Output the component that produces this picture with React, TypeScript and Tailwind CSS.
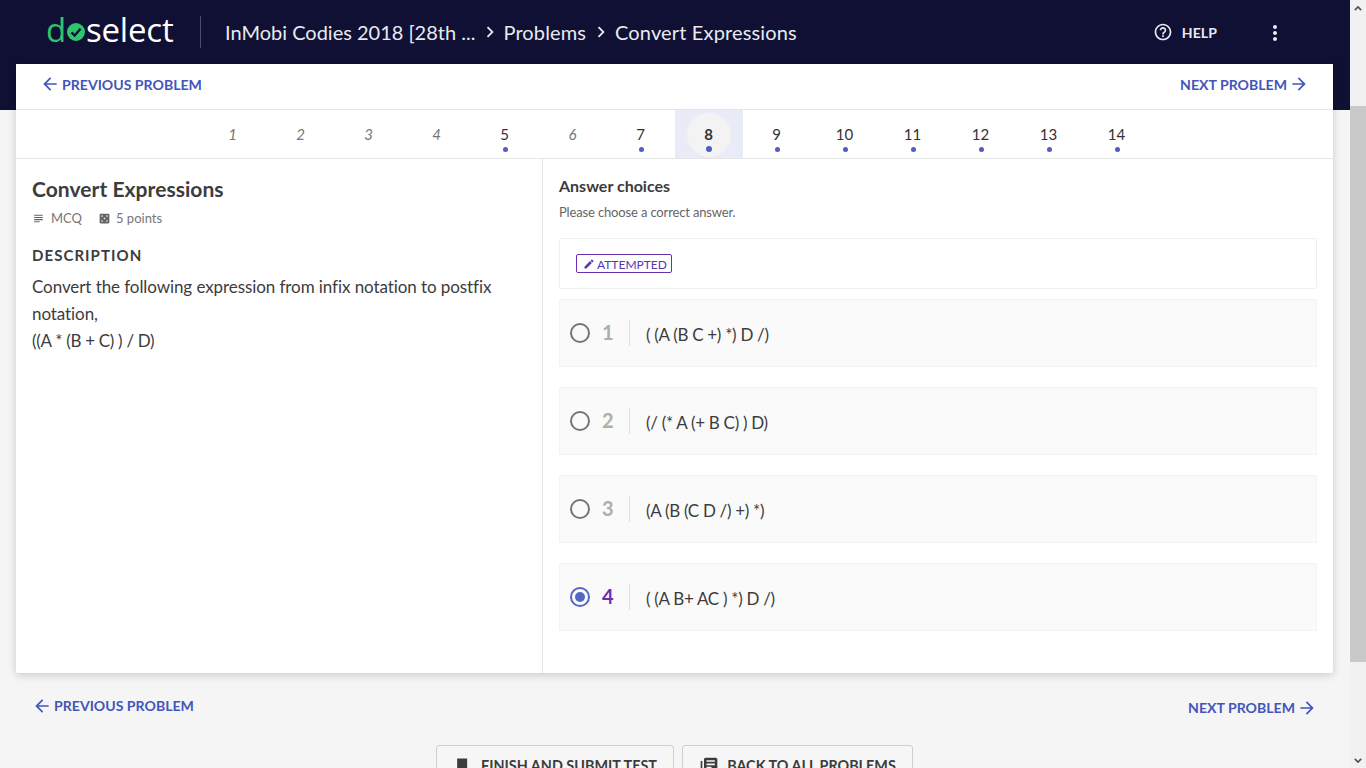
import {
  MdArrowBack,
  MdArrowForward,
  MdCasino,
  MdChevronRight,
  MdEdit,
  MdHelpOutline,
  MdLibraryBooks,
  MdMoreVert,
  MdSubject,
} from "react-icons/md";

const problems = [
  { n: 1, done: false },
  { n: 2, done: false },
  { n: 3, done: false },
  { n: 4, done: false },
  { n: 5, done: true },
  { n: 6, done: false },
  { n: 7, done: true },
  { n: 8, done: true, active: true },
  { n: 9, done: true },
  { n: 10, done: true },
  { n: 11, done: true },
  { n: 12, done: true },
  { n: 13, done: true },
  { n: 14, done: true },
];

const choices = [
  { n: 1, text: "( (A (B C +) *) D /)" },
  { n: 2, text: "(/ (* A (+ B C) ) D)" },
  { n: 3, text: "(A (B (C D /) +) *)" },
  { n: 4, text: "( (A B+ AC ) *) D /)", selected: true },
];

const Logo = () => (
  <div className="flex items-center text-[33px] leading-none tracking-[-0.2px] font-['Open_Sans',sans-serif]">
    <span className="text-[#2fc46e]">d</span>
    <svg viewBox="0 0 20 20" className="w-[18px] h-[18px] mt-[5px] mx-[1px]">
      <circle cx="10" cy="10" r="10" fill="#2fc46e" />
      <path d="M5 10.5l3.5 3.5L15 6.5" fill="none" stroke="#0f1033" strokeWidth="2.6" />
    </svg>
    <span className="text-white">select</span>
  </div>
);

const Header = () => (
  <header className="h-[110px] -mb-[46px] bg-[#0f1033] shrink-0">
    <div className="h-[64px] pl-[46px] pr-[64px] flex items-center text-[#e8eaf0]">
      <div className="w-[154px] -mt-[6px]">
        <Logo />
      </div>
      <div className="w-px h-[32px] bg-white/25 mr-[24px] -mt-[1px]" />
      <div className="flex items-center text-[20px] whitespace-nowrap">
        <span>InMobi Codies 2018 [28th ...</span>
        <MdChevronRight className="w-[22px] h-[22px] ml-[4px] mr-[2px]" />
        <span className="tracking-[0.12px]">Problems</span>
        <MdChevronRight className="w-[22px] h-[22px] ml-[4px] mr-[3px]" />
        <span className="tracking-[0.15px]">Convert Expressions</span>
      </div>
      <div className="ml-auto flex items-center">
        <MdHelpOutline className="w-[20px] h-[20px] mr-[9px]" />
        <span className="text-[14px] font-bold tracking-[0.1px] mr-[46px]">HELP</span>
        <MdMoreVert className="w-[24px] h-[24px] mr-[-1px] mt-[2px]" />
      </div>
    </div>
  </header>
);

const NavBar = () => (
  <div className="h-[46px] px-[24px] pb-[4px] flex items-center justify-between border-b border-[#e5e5e5] text-[#4355bb] text-[14.1px] font-bold">
    <a className="flex items-center gap-[2px]">
      <MdArrowBack className="w-[20px] h-[20px]" />
      PREVIOUS PROBLEM
    </a>
    <a className="flex items-center gap-[2px]">
      NEXT PROBLEM
      <MdArrowForward className="w-[20px] h-[20px]" />
    </a>
  </div>
);

const ProblemTabs = () => (
  <div className="h-[49px] flex justify-center border-b border-[#e5e5e5]">
    {problems.map((p) => (
      <div
        key={p.n}
        className={
          "relative w-[68px] flex items-center justify-center " +
          (p.active ? "bg-[#e9ecf6]" : "")
        }
      >
        {p.active && <div className="absolute left-[12px] top-[3px] w-[44px] h-[44px] rounded-full bg-[#f3f3f3]" />}
        <span
          className={
            "relative text-[15px] " +
            (p.active ? "font-bold text-[#333]" : p.done ? "text-[#333]" : "italic text-[#777]")
          }
        >
          {p.n}
        </span>
        {p.done && (
          <span
            className={
              "absolute rounded-full bg-[#4d5ec1] " +
              (p.active ? "left-[31px] top-[36px] w-[6px] h-[6px]" : "left-[32px] top-[37px] w-[5px] h-[5px]")
            }
          />
        )}
      </div>
    ))}
  </div>
);

const Description = () => (
  <section className="w-[527px] shrink-0 border-r border-[#e5e5e5] pl-[16px] pr-[30px] pt-[17px] text-[#3c3c3c]">
    <h1 className="text-[21px] leading-[26px] font-bold tracking-[0.05px]">Convert Expressions</h1>
    <div className="mt-[7px] flex items-center text-[13px] leading-[18px] text-[#777]">
      <MdSubject className="w-[13px] h-[13px] mr-[6px] text-[#666]" />
      <span className="mr-[16px]">MCQ</span>
      <MdCasino className="w-[13px] h-[13px] mr-[5px] text-[#666]" />
      <span>5 points</span>
    </div>
    <h2 className="mt-[18px] text-[15px] leading-[20px] font-bold tracking-[1.05px]">DESCRIPTION</h2>
    <p className="mt-[8px] text-[17px] leading-[27px] tracking-[-0.08px]">
      Convert the following expression from infix notation to postfix notation,
      <br />
      <span className="tracking-[-0.3px]">((A * (B + C) ) / D)</span>
    </p>
  </section>
);

const Choice = ({ n, text, selected }: { n: number; text: string; selected?: boolean }) => (
  <div className="h-[68px] flex items-center bg-[#fafafa] border border-[#f3f3f3] rounded-[2px] pl-[10px]">
    <span
      className={
        "w-[20px] h-[20px] rounded-full border-2 flex items-center justify-center " +
        (selected ? "border-[#5467c4]" : "border-[#757575]")
      }
    >
      {selected && <span className="w-[10px] h-[10px] rounded-full bg-[#5467c4]" />}
    </span>
    <span
      className={
        "w-[27px] ml-[12px] pb-[2px] text-[20px] font-bold " + (selected ? "text-[#6930b0]" : "text-[#aab0aa]")
      }
    >
      {n}
    </span>
    <span className="w-px h-[26px] bg-[#e0e0e0]" />
    <span className="ml-[16px] pt-[4px] text-[17px] text-[#3c3c3c] tracking-[-0.3px]">{text}</span>
  </div>
);

const Answers = () => (
  <section className="flex-1 pl-[16px] pr-[16px] pt-[17px]">
    <h2 className="text-[16px] leading-[20px] font-bold text-[#3c3c3c]">Answer choices</h2>
    <p className="mt-[7px] text-[13px] leading-[18px] text-[#666] tracking-[-0.15px]">Please choose a correct answer.</p>
    <div className="mt-[17px] h-[51px] flex items-center border border-[#f0f0f0] rounded-[2px] pl-[16px]">
      <span className="h-[19px] flex items-center gap-[2px] pl-[6px] pr-[4px] border border-[#6930b0] rounded-[2px] text-[12px] text-[#5a35b0]">
        <MdEdit className="w-[12px] h-[12px]" />
        <span className="pt-[2px]">ATTEMPTED</span>
      </span>
    </div>
    <div className="mt-[10px] flex flex-col gap-[20px]">
      {choices.map((c) => (
        <Choice key={c.n} n={c.n} text={c.text} selected={c.selected} />
      ))}
    </div>
  </section>
);

const Footer = () => (
  <>
    <div className="w-[1317px] mx-[16px] h-[72px] flex justify-between text-[#4355bb] text-[14.1px] font-bold">
      <a className="flex items-center gap-[2px] h-[20px] mt-[23px] ml-[16px]">
        <MdArrowBack className="w-[20px] h-[20px]" />
        PREVIOUS PROBLEM
      </a>
      <a className="flex items-center gap-[2px] h-[20px] mt-[25px] mr-[16px]">
        NEXT PROBLEM
        <MdArrowForward className="w-[20px] h-[20px]" />
      </a>
    </div>
    <div className="flex justify-center gap-[8px] pr-px text-[14.4px] font-bold text-[#3c3c3c]">
      <button className="w-[238px] h-[44px] flex items-start justify-center gap-[8px] pt-[9px] bg-[#f6f6f6] border border-[#cfcfcf] rounded-[3px]">
        <svg viewBox="0 0 24 24" className="w-[20px] h-[20px] mt-[1px]" fill="currentColor">
          <path d="M5 3h12v18l-6-3-6 3z" />
        </svg>
        FINISH AND SUBMIT TEST
      </button>
      <button className="w-[231px] h-[44px] flex items-start justify-center gap-[8px] pt-[9px] bg-[#f6f6f6] border border-[#cfcfcf] rounded-[3px]">
        <MdLibraryBooks className="w-[20px] h-[20px] mt-[1px]" />
        BACK TO ALL PROBLEMS
      </button>
    </div>
  </>
);

const Scrollbar = () => (
  <div className="w-[16px] shrink-0 bg-[#f1f1f1] flex flex-col items-center pt-[6px] pb-[5px]">
    <svg viewBox="0 0 10 6" className="w-[8px] h-[5px]">
      <path d="M1 5l4-4 4 4" fill="none" stroke="#505050" strokeWidth="2" />
    </svg>
    <div className="w-full h-[556px] mt-[95px] bg-[#c9c9c9]" />
    <svg viewBox="0 0 10 6" className="w-[8px] h-[5px] mt-auto">
      <path d="M1 1l4 4 4-4" fill="none" stroke="#505050" strokeWidth="2" />
    </svg>
  </div>
);

export default function App() {
  return (
    <div className="h-screen w-full overflow-hidden flex bg-[#f5f5f5] font-['Lato',sans-serif]">
      <main className="flex-1 min-w-0 overflow-hidden">
        <Header />
        <div className="relative w-[1317px] h-[609px] mx-[16px] bg-white rounded-b-[2px] shadow-[0_2px_8px_rgba(0,0,0,0.18)] flex flex-col">
          <NavBar />
          <ProblemTabs />
          <div className="flex-1 flex min-h-0">
            <Description />
            <Answers />
          </div>
        </div>
        <Footer />
      </main>
      <Scrollbar />
    </div>
  );
}
